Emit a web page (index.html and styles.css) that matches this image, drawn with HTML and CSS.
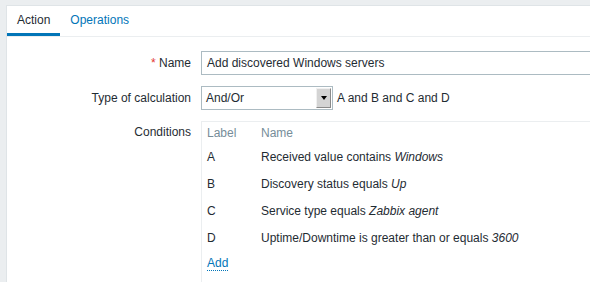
FILE: index.html
```html
<!DOCTYPE html>
<html>
<head>
    <meta charset="UTF-8">
    <title>Action</title>
    <link rel="stylesheet" href="styles.css">
</head>

<body>
    <div class="panel">
        <div class="tabs">
            <a class="tab active">Action</a>
            <a class="tab">Operations</a>
        </div>

        <div class="form">
            <div class="row">
                <label class="lbl"><span class="req">*</span> Name</label>
                <div class="field"><div class="input">Add discovered Windows servers</div></div>
            </div>
            <div class="row">
                <label class="lbl">Type of calculation</label>
                <div class="field">
                    <div class="select">
                        <span class="select-text">And/Or</span>
                        <span class="select-btn"><span class="arrow"></span></span>
                    </div>
                    <span class="formula">A and B and C and D</span>
                </div>
            </div>
            <div class="row">
                <label class="lbl cond-lbl">Conditions</label>
                <div class="field">
                    <div class="conditions">
                        <table>
                            <tr class="head"><td class="c-label">Label</td><td>Name</td></tr>
                            <tr><td class="c-label">A</td><td>Received value contains <i>Windows</i></td></tr>
                            <tr><td class="c-label">B</td><td>Discovery status equals <i>Up</i></td></tr>
                            <tr><td class="c-label">C</td><td>Service type equals <i>Zabbix agent</i></td></tr>
                            <tr><td class="c-label">D</td><td>Uptime/Downtime is greater than or equals <i>3600</i></td></tr>
                        </table>
                        <a class="add">Add</a>
                    </div>
                </div>
            </div>
        </div>
    </div>
</body>
</html>
```

FILE: styles.css
```css
body {
    margin: 0;
    padding: 5px 0 0 6px;
    background: #ebeef0;
    font-family: "Liberation Sans", Arial, sans-serif;
    font-size: 12px;
    color: #1f2c33;
    overflow: hidden;
    height: 277px;
}

.panel {
    background: #fff;
    border: 1px solid #dfe4e7;
    border-right: none;
    height: 300px;
}

.tabs {
    display: flex;
    height: 30px;
    border-bottom: 1px solid #ebeef0;
}
.tab {
    padding: 2px 10px 0;
    line-height: 25px;
    color: #0275b8;
    border-bottom: 3px solid transparent;
}
.tab.active {
    color: #1f2c33;
    border-bottom-color: #0275b8;
}

.form { padding-top: 14px; display: flex; flex-direction: column; gap: 11px; }
.row { display: flex; align-items: center; }
.row:last-child { align-items: flex-start; }
.lbl {
    width: 184px;
    padding-right: 10px;
    text-align: right;
    flex-shrink: 0;
}
.req { color: #e33734; }
.cond-lbl { padding-top: 4px; }

.field { display: flex; align-items: center; flex: 1; min-width: 0; }
.input {
    flex: 1;
    height: 22px;
    line-height: 22px;
    border: 1px solid #acbbc2;
    border-right: none;
    padding: 0 5px;
    white-space: nowrap;
}

.select {
    display: flex;
    width: 130px;
    height: 22px;
    border: 1px solid #acbbc2;
}
.select-text { flex: 1; line-height: 22px; padding-left: 4px; }
.select-btn {
    width: 13px;
    margin: 1px;
    background: #d4d4d4;
    border-right: 1px solid #8a8a8a;
    border-bottom: 1px solid #8a8a8a;
    border-top: 1px solid #f0f0f0;
    border-left: 1px solid #f0f0f0;
    display: flex;
    align-items: center;
    justify-content: center;
}
.arrow {
    border-left: 3px solid transparent;
    border-right: 3px solid transparent;
    border-top: 4px solid #000;
}
.formula { padding-left: 4px; }

.conditions {
    flex: 1;
    border: 1px solid #ebeef0;
    border-right: none;
    padding: 4px 5px 0;
    height: 200px;
}
table { border-collapse: collapse; }
td { padding: 0; height: 27px; white-space: nowrap; }
.head td { color: #768d99; height: 14px; padding-bottom: 3px; }
.c-label { width: 54px; }
.add {
    display: inline-block;
    margin-top: 6px;
    color: #0275b8;
    border-bottom: 1px dotted #0275b8;
    line-height: 13px;
}
```
